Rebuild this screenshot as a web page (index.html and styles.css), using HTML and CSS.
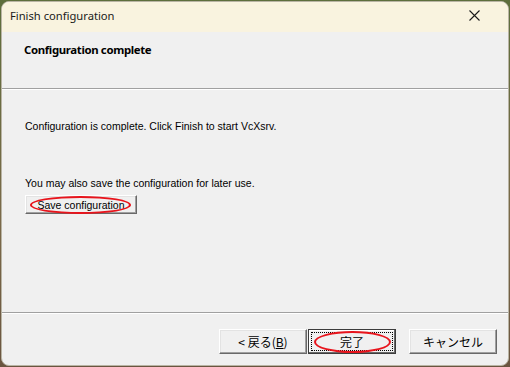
FILE: index.html
```html
<!DOCTYPE html>
<html lang="ja">
<head>
    <meta charset="UTF-8">
    <title>Finish configuration</title>
    <link rel="stylesheet" href="styles.css">
</head>
<body>
    <div class="window">
        <div class="titlebar">
            <span class="title">Finish configuration</span>
            <svg class="close" width="11" height="11" viewBox="0 0 11 11">
                <path d="M0.5 0.5 L10.5 10.5 M10.5 0.5 L0.5 10.5" stroke="#1a1a1a" stroke-width="1.1" fill="none"/>
            </svg>
        </div>

        <div class="header">
            <h1>Configuration complete</h1>
        </div>
        <div class="sep"></div>

        <div class="content">
            <p class="msg">Configuration is complete. Click Finish to start VcXsrv.</p>
            <p class="msg later">You may also save the configuration for later use.</p>
            <button class="btn save">
                <span class="mark">Save configuration</span>
            </button>
        </div>

        <div class="sep"></div>
        <div class="footer">
            <button class="btn nav">&lt;&nbsp;戻る(<u>B</u>)</button>
            <button class="btn nav default"><span class="focus"><span class="mark">完了</span></span></button>
            <button class="btn nav cancel">キャンセル</button>
        </div>
    </div>
</body>
</html>
```

FILE: styles.css
```css
* {
    box-sizing: border-box;
}
body {
    margin: 0;
    padding: 1px 0 0 1px;
    width: 510px;
    height: 367px;
    overflow: hidden;
    background: linear-gradient(180deg, #5d6e3c 0%, #7b6a4a 60%, #6a5540 100%);
}
.window {
    width: 508px;
    height: 365px;
    display: flex;
    flex-direction: column;
    background-color: #f0f0f0;
    border: 1px solid #b9b4a4;
    border-radius: 8px;
    overflow: hidden;
}
.titlebar {
    height: 30px;
    flex: none;
    display: flex;
    align-items: center;
    justify-content: space-between;
    padding: 0 28px 3px 8px;
    background-color: #f9f3df;
}
.title {
    font-family: "Noto Sans", sans-serif;
    font-size: 11.2px;
    color: #1a1a1a;
}
.close {
    display: block;
}
.header {
    height: 56px;
    flex: none;
    padding: 10px 0 0 22px;
}
h1 {
    margin: 0;
    font-family: "Noto Sans", sans-serif;
    font-size: 11.4px;
    font-weight: bold;
    letter-spacing: -0.35px;
    line-height: 15px;
    color: #000;
}
.sep {
    height: 2px;
    flex: none;
    border-top: 1px solid #a0a0a0;
    border-bottom: 1px solid #fff;
}
.content {
    flex: 1;
    padding: 29px 0 0 23px;
}
.msg {
    margin: 0;
    font-family: "Liberation Sans", sans-serif;
    font-size: 10.5px;
    line-height: 15px;
    color: #000;
}
.later {
    margin-top: 42px;
}
.btn {
    position: relative;
    margin: 0;
    padding: 0;
    background-color: #f0f0f0;
    border: 1px solid;
    border-color: #fff #696969 #696969 #fff;
    box-shadow: inset -1px -1px 0 #a0a0a0, inset 1px 1px 0 #e3e3e3;
    font-family: "Liberation Sans", "Noto Sans CJK JP", sans-serif;
    font-size: 10.5px;
    color: #000;
}
.save {
    display: block;
    margin-top: 4px;
    width: 112px;
    height: 19px;
}
.footer {
    height: 51px;
    flex: none;
    display: flex;
    justify-content: flex-end;
    padding: 15px 11px 0 0;
}
.nav {
    width: 88px;
    height: 25px;
    font-family: "Noto Sans CJK JP", sans-serif;
    font-size: 12px;
}
.nav u {
    text-decoration: underline;
}
.default {
    margin-left: 1px;
    border: 1px solid #3c3c3c;
    box-shadow: inset -1px -1px 0 #696969, inset 1px 1px 0 #fff;
    padding: 2px;
}
.focus {
    display: flex;
    align-items: center;
    justify-content: center;
    height: 100%;
    border: 1px dotted #000;
}
.cancel {
    margin-left: 13px;
}
/* hand drawn annotation circles */
.mark {
    position: relative;
}
.mark::after {
    content: "";
    position: absolute;
    border: 2px solid #e8141c;
    border-radius: 50%;
}
.save .mark::after {
    left: -8px;
    right: -7px;
    top: -3px;
    bottom: -3px;
}
.default .mark::after {
    left: -26px;
    right: -27px;
    top: -2px;
    bottom: -3px;
}
```
